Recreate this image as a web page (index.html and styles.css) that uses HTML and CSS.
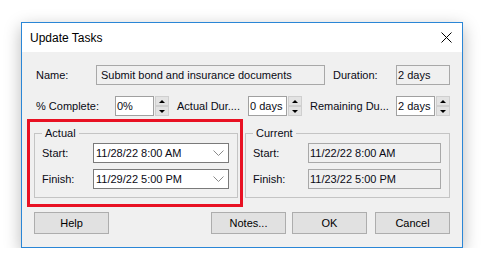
FILE: index.html
```html
<!DOCTYPE html>
<html>
<head>
<meta charset="utf-8">
<link rel="stylesheet" href="styles.css">
</head>
<body>
<div class="window">
  <div class="titlebar">
    <span class="title">Update Tasks</span>
    <svg class="close" width="11" height="11" viewBox="0 0 11 11"><path d="M0.5 0.5 L10.5 10.5 M10.5 0.5 L0.5 10.5" stroke="#000" stroke-width="1" fill="none"/></svg>
  </div>
  <div class="content">
    <div class="row row1">
      <span class="lbl c-name">Name:</span>
      <div class="field ro f-name">Submit bond and insurance documents</div>
      <span class="lbl c-dur">Duration:</span>
      <div class="field ro f-dur">2 days</div>
    </div>
    <div class="row row2">
      <span class="lbl c-pct">% Complete:</span>
      <div class="field edit">0%</div>
      <div class="spin"><span class="sb"><i class="up"></i></span><span class="sb"><i class="down"></i></span></div>
      <span class="lbl c-ad">Actual Dur....</span>
      <div class="field edit">0 days</div>
      <div class="spin"><span class="sb"><i class="up"></i></span><span class="sb"><i class="down"></i></span></div>
      <span class="lbl c-rd">Remaining Du...</span>
      <div class="field edit">2 days</div>
      <div class="spin"><span class="sb"><i class="up"></i></span><span class="sb"><i class="down"></i></span></div>
    </div>
    <div class="groups">
      <div class="highlight">
        <fieldset class="group actual">
          <legend>Actual</legend>
          <div class="grow">
            <span class="glbl">Start:</span>
            <div class="combo"><span>11/28/22 8:00 AM</span><svg width="11" height="6" viewBox="0 0 11 6"><path d="M0.5 0.5 L5.5 5.5 L10.5 0.5" stroke="#8a8a8a" stroke-width="1" fill="none"/></svg></div>
          </div>
          <div class="grow">
            <span class="glbl">Finish:</span>
            <div class="combo"><span>11/29/22 5:00 PM</span><svg width="11" height="6" viewBox="0 0 11 6"><path d="M0.5 0.5 L5.5 5.5 L10.5 0.5" stroke="#8a8a8a" stroke-width="1" fill="none"/></svg></div>
          </div>
        </fieldset>
      </div>
      <fieldset class="group current">
        <legend>Current</legend>
        <div class="grow">
          <span class="glbl">Start:</span>
          <div class="field ro f-cur">11/22/22 8:00 AM</div>
        </div>
        <div class="grow">
          <span class="glbl">Finish:</span>
          <div class="field ro f-cur">11/23/22 5:00 PM</div>
        </div>
      </fieldset>
    </div>
    <div class="buttons">
      <div class="btn">Help</div>
      <div class="btn b-notes">Notes...</div>
      <div class="btn b-ok">OK</div>
      <div class="btn b-cancel">Cancel</div>
    </div>
  </div>
</div>
</body>
</html>
```
FILE: styles.css
```css
* { box-sizing: border-box; }
html, body { margin: 0; padding: 0; background: #fff; }
body {
  font-family: "Liberation Sans", Arial, sans-serif;
  font-size: 11px;
  color: #0a0a14;
  padding: 22px 0 0 21px;
}
.window {
  width: 442px;
  height: 226px;
  border: 1px solid #2a86d6;
  background: #f0f0f0;
  box-shadow: 0 5px 16px rgba(0,0,0,0.28);
  display: flex;
  flex-direction: column;
}
.titlebar {
  height: 29px;
  background: #fff;
  display: flex;
  align-items: center;
  padding: 0 10px 0 8px;
  flex-shrink: 0;
}
.title {
  font-size: 12px;
  color: #000;
  flex: 1;
  padding-top: 1px;
}
.close { display: block; }
.content {
  padding: 13px 12px 13px 0;
}
.row { display: flex; align-items: center; height: 20px; }
.row1 { padding-left: 14px; }
.row2 { padding-left: 14px; margin-top: 11px; }
.lbl { white-space: nowrap; flex-shrink: 0; }
.c-name { width: 60px; }
.c-dur { width: 63px; margin-left: 8px; }
.c-pct { width: 79px; }
.c-ad { width: 71px; margin-left: 8px; }
.c-rd { width: 86px; margin-left: 8px; }
.field {
  height: 20px;
  border: 1px solid #a8a8a8;
  display: flex;
  align-items: center;
  white-space: nowrap;
  overflow: hidden;
  flex-shrink: 0;
}
.ro { background: #f0f0f0; }
.f-name { width: 229px; padding-left: 4px; }
.f-dur { width: 54px; padding-left: 1px; }
.edit { width: 39px; background: #fff; border-color: #a0a0a0; padding-left: 1px; }
.spin {
  width: 14px;
  height: 20px;
  margin-left: 1px;
  display: flex;
  flex-direction: column;
  flex-shrink: 0;
}
.sb {
  height: 10px;
  background: #e3e3e3;
  border: 1px solid #cfcfcf;
  display: flex;
  align-items: center;
  justify-content: center;
}
.sb i { display: block; width: 0; height: 0; border-left: 3px solid transparent; border-right: 3px solid transparent; }
.sb .up { border-bottom: 3px solid #000; }
.sb .down { border-top: 3px solid #000; }
.groups {
  display: flex;
  align-items: flex-start;
  margin-top: 3px;
  padding-left: 5px;
}
.highlight {
  border: 3px solid #e81123;
  padding: 4px 2px 6px 4px;
}
.group {
  margin: 0;
  min-width: 0;
  border: 1px solid #c4c4c4;
  padding: 2px 8px 8px 7px;
  height: 72px;
}
.group legend {
  padding: 0 3px;
  line-height: 15px;
  height: 15px;
}
.actual { width: 204px; }
.current { width: 205px; margin-left: 2px; margin-top: 7px; }
.grow { display: flex; align-items: center; height: 20px; }
.grow + .grow { margin-top: 6px; }
.glbl { flex-shrink: 0; }
.actual .glbl { width: 51px; }
.current .glbl { width: 55px; }
.combo {
  width: 136px;
  height: 20px;
  background: #fff;
  border: 1px solid #7a7a7a;
  display: flex;
  align-items: center;
  justify-content: space-between;
  padding: 0 4px 0 2px;
}
.combo svg { display: block; }
.f-cur { width: 133px; padding-left: 1px; }
.buttons {
  display: flex;
  margin-top: 5px;
  padding-left: 12px;
}
.btn {
  width: 75px;
  height: 22px;
  background: #e1e1e1;
  border: 1px solid #adadad;
  display: flex;
  align-items: center;
  justify-content: center;
  color: #000;
}
.b-notes { margin-left: auto; }
.b-ok { margin-left: 6px; }
.b-cancel { margin-left: 8px; }
```
